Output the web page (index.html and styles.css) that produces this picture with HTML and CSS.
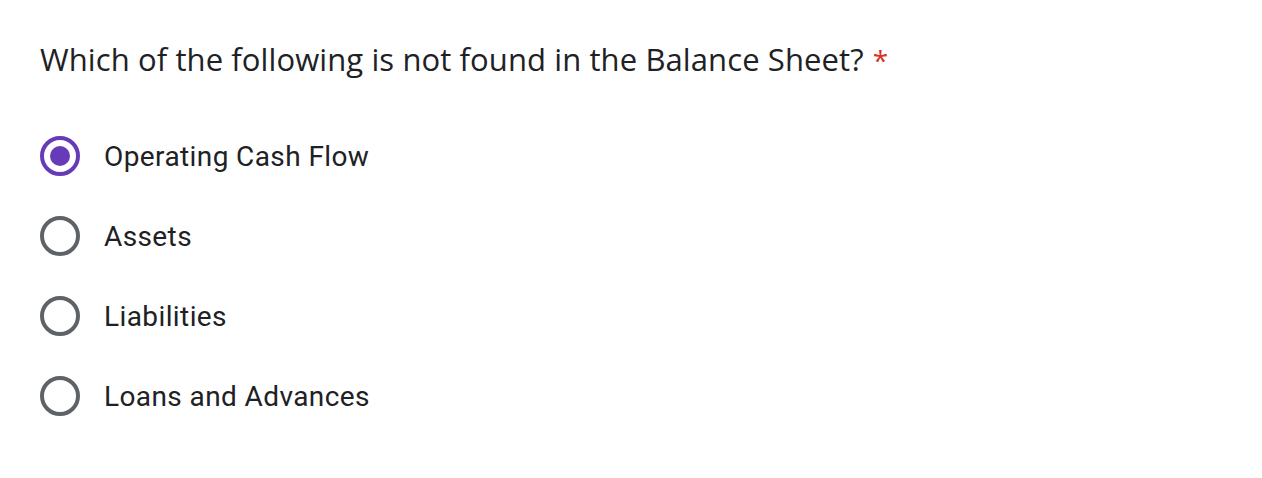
FILE: index.html
```html
<!DOCTYPE html>
<html>
<head>
<meta charset="utf-8">
<link rel="stylesheet" href="styles.css">
</head>
<body>
<div class="question">
  <div class="title">Which of the following is not found in the Balance Sheet?<span class="req">*</span></div>
  <div class="options">
    <div class="option"><span class="radio checked"><span class="dot"></span></span><span class="label">Operating Cash Flow</span></div>
    <div class="option"><span class="radio"></span><span class="label">Assets</span></div>
    <div class="option"><span class="radio"></span><span class="label">Liabilities</span></div>
    <div class="option"><span class="radio"></span><span class="label">Loans and Advances</span></div>
  </div>
</div>
</body>
</html>
```
FILE: styles.css
```css
html, body {
  margin: 0;
  padding: 0;
  background: #ffffff;
}
.question {
  padding: 35px 40px 0 40px;
}
.title {
  font-family: "Open Sans", sans-serif;
  font-size: 31px;
  line-height: 48px;
  color: #202124;
  letter-spacing: 0.1px;
}
.req {
  color: #d93025;
  margin-left: 9px;
  font-size: 28px;
}
.options {
  margin-top: 32px;
  display: flex;
  flex-direction: column;
}
.option {
  display: flex;
  align-items: center;
  height: 80px;
}
.radio {
  box-sizing: border-box;
  width: 40px;
  height: 40px;
  border: 4px solid #5f6368;
  border-radius: 50%;
  display: flex;
  align-items: center;
  justify-content: center;
}
.radio.checked {
  border-color: #673ab7;
}
.dot {
  width: 20px;
  height: 20px;
  border-radius: 50%;
  background: #673ab7;
}
.label {
  margin-left: 24px;
  font-family: Roboto, sans-serif;
  font-size: 28px;
  color: #202124;
  letter-spacing: 0.4px;
}
```
